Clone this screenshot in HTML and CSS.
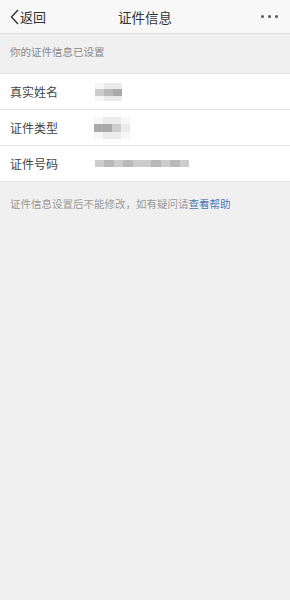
FILE: index.html
```html
<!DOCTYPE html>
<html lang="zh-CN">
<head>
  <meta charset="UTF-8">
  <title>证件信息</title>
  <link rel="stylesheet" href="styles.css">
</head>
<body>

  <div class="navbar">
    <div class="back">
      <svg width="9" height="16" viewBox="0 0 9 16"><path d="M8 1 L1.5 8 L8 15" fill="none" stroke="#333" stroke-width="1.4"/></svg>
      <span>返回</span>
    </div>
    <div class="title">证件信息</div>
    <div class="more"><i></i><i></i><i></i></div>
  </div>

  <div class="tip">你的证件信息已设置</div>

  <div class="card">
    <div class="row">
      <div class="label">真实姓名</div>
      <!-- blurred name -->
      <div class="mosaic m-name">
        <i class="e"></i><i class="d"></i><i class="d"></i>
        <i class="c"></i><i class="a"></i><i class="b"></i>
        <i class="e"></i><i class="d"></i><i class="d"></i>
      </div>
    </div>
    <div class="row">
      <div class="label">证件类型</div>
      <div class="mosaic m-type">
        <i class="e"></i><i class="d"></i><i class="d"></i><i class="e"></i>
        <i class="b"></i><i class="b"></i><i class="c"></i><i class="d"></i>
        <i class="e"></i><i class="d"></i><i class="d"></i><i class="e"></i>
      </div>
    </div>
    <div class="row">
      <div class="label">证件号码</div>
      <div class="mosaic m-id">
        <i class="c"></i><i class="a"></i><i class="c"></i><i class="a"></i><i class="c"></i><i class="c"></i><i class="a"></i><i class="c"></i><i class="a"></i><i class="c"></i>
      </div>
    </div>
  </div>

  <div class="note">证件信息设置后不能修改，如有疑问请<a href="#">查看帮助</a></div>

</body>
</html>
```

FILE: styles.css
```css
body {
  font-family: "Noto Sans CJK SC", "Noto Sans", sans-serif;
  background-color: #f0f0f0;
  color: #333;
  margin: 0;
  padding: 0;
}

.navbar {
  height: 33px;
  background-color: #f8f8f8;
  border-bottom: 1px solid #dcdcdc;
  display: flex;
  align-items: center;
  justify-content: space-between;
  padding: 0 12px 0 10px;
  position: relative;
}

.back {
  display: flex;
  align-items: center;
  gap: 1px;
  font-size: 13px;
  color: #333;
}

.title {
  position: absolute;
  left: 0;
  right: 0;
  text-align: center;
  font-size: 13.5px;
  color: #333;
  pointer-events: none;
}

.more {
  display: flex;
  gap: 4px;
}

.more i {
  width: 3px;
  height: 3px;
  border-radius: 50%;
  background-color: #555;
}

.tip {
  font-size: 10.5px;
  color: #888;
  padding: 10px 10px 0;
  height: 29px;
}

.card {
  background-color: #fff;
  border-top: 1px solid #e2e2e2;
  border-bottom: 1px solid #e2e2e2;
}

.row {
  height: 35px;
  display: flex;
  align-items: center;
  border-top: 1px solid #e4e4e4;
}

.row:first-child {
  border-top: none;
  height: 35px;
}

.label {
  width: 84px;
  padding-left: 10px;
  font-size: 12px;
  color: #444;
}

.mosaic {
  display: grid;
}

.m-name {
  grid-template-columns: repeat(3, 9px);
  grid-template-rows: 6px 7px 5px;
  margin-left: 1px;
}

.m-type {
  grid-template-columns: repeat(4, 9px);
  grid-template-rows: 7px 8px 7px;
}

.m-id {
  grid-template-columns: repeat(10, 9.4px);
  grid-template-rows: 7px;
  margin-left: 1px;
}

.mosaic .a { background-color: #b9b9b9; }
.mosaic .b { background-color: #aaaaaa; }
.mosaic .c { background-color: #cccccc; }
.mosaic .d { background-color: #ebebeb; }
.mosaic .e { background-color: #f6f6f6; }

.note {
  font-size: 10.5px;
  color: #999;
  padding: 14px 10px;
}

.note a {
  color: #4a78b0;
  text-decoration: none;
}
```
